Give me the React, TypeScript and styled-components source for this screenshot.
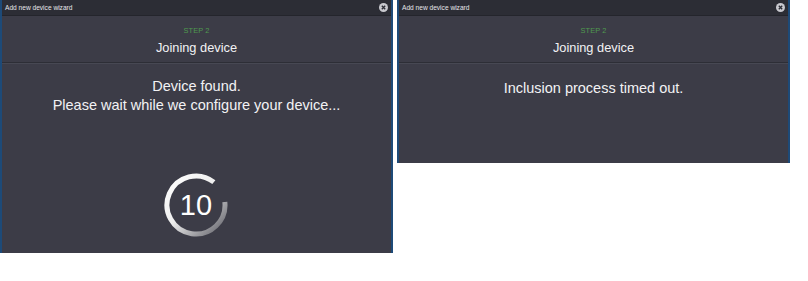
import React from 'react';
import styled, { createGlobalStyle } from 'styled-components';

const colors = {
  panel: '#3c3c47',
  header: '#2c2d35',
  edge: '#1d4a78',
  text: '#f2f2f4',
  step: '#4f9a4f',
};

const GlobalStyle = createGlobalStyle`
  html, body {
    margin: 0;
    padding: 0;
    background: #ffffff;
  }
  body {
    font-family: "Liberation Sans", Arial, sans-serif;
  }
`;

const Page = styled.div`
  display: flex;
  align-items: flex-start;
  gap: 4px;
  width: 808px;
  height: 281px;
`;

const Wizard = styled.div<{ $height: number }>`
  display: flex;
  flex-direction: column;
  box-sizing: border-box;
  width: 393px;
  height: ${(p) => p.$height}px;
  background: ${colors.panel};
  border-left: 2px solid ${colors.edge};
  border-right: 2px solid ${colors.edge};
  color: ${colors.text};
  overflow: hidden;
`;

const TitleBar = styled.div`
  display: flex;
  align-items: center;
  justify-content: space-between;
  height: 15px;
  padding: 0 3px 0 3px;
  background: ${colors.header};
  border-bottom: 1px solid #24252c;
  font-size: 6.6px;
  color: #e6e6ea;
`;

const CloseButton = styled.button`
  display: flex;
  align-items: center;
  justify-content: center;
  width: 10px;
  height: 10px;
  padding: 0;
  border: 0;
  background: none;
  cursor: pointer;
`;

const StepHeader = styled.div`
  display: flex;
  flex-direction: column;
  align-items: center;
  height: 46px;
  border-bottom: 1px solid #2d2e36;
  box-shadow: 0 1px 0 #474853;
`;

const StepLabel = styled.div`
  margin-top: 10px;
  font-size: 7.4px;
  letter-spacing: 0.1px;
  color: ${colors.step};
`;

const StepTitle = styled.div`
  margin-top: 5px;
  font-size: 12.8px;
`;

const Message = styled.div<{ $top: number }>`
  margin-top: ${(p) => p.$top}px;
  text-align: center;
  font-size: 14.5px;
  line-height: 19px;
`;

const Countdown = styled.div`
  position: relative;
  align-self: center;
  width: 66px;
  height: 66px;
  margin-top: 57px;
  margin-right: 1px;
`;

const CountdownValue = styled.span`
  position: absolute;
  inset: 0;
  display: flex;
  align-items: center;
  justify-content: center;
  padding-top: 1px;
  font-size: 29px;
  color: #ffffff;
`;

function CloseIcon(): JSX.Element {
  return (
    <svg width="9" height="9" viewBox="0 0 10 10">
      <circle cx="5" cy="5" r="5" fill="#c9c9cf" />
      <path d="M3.1 3.1L6.9 6.9M6.9 3.1L3.1 6.9" stroke={colors.header} strokeWidth="1.5" />
    </svg>
  );
}

function Ring(): JSX.Element {
  // arc runs from ~1 o'clock counter-clockwise round to ~3 o'clock
  const r = 29;
  const c = 33;
  const start = (-52 * Math.PI) / 180;
  const end = (-6 * Math.PI) / 180;
  const x1 = c + r * Math.cos(start);
  const y1 = c + r * Math.sin(start);
  const x2 = c + r * Math.cos(end);
  const y2 = c + r * Math.sin(end);
  return (
    <svg width="66" height="66" viewBox="0 0 66 66">
      <defs>
        <linearGradient id="ring" x1="0" y1="0" x2="1" y2="1">
          <stop offset="0" stopColor="#ffffff" />
          <stop offset="0.45" stopColor="#eeeeee" />
          <stop offset="1" stopColor="#5e5e66" />
        </linearGradient>
      </defs>
      <path
        d={`M${x1} ${y1} A${r} ${r} 0 1 0 ${x2} ${y2}`}
        fill="none"
        stroke="url(#ring)"
        strokeWidth="5"
      />
    </svg>
  );
}

function Header(): JSX.Element {
  return (
    <>
      <TitleBar>
        <span>Add new device wizard</span>
        <CloseButton aria-label="Close">
          <CloseIcon />
        </CloseButton>
      </TitleBar>
      <StepHeader>
        <StepLabel>STEP 2</StepLabel>
        <StepTitle>Joining device</StepTitle>
      </StepHeader>
    </>
  );
}

export default function App(): JSX.Element {
  return (
    <Page>
      <GlobalStyle />
      <Wizard $height={253}>
        <Header />
        <Message $top={14}>
          Device found.
          <br />
          Please wait while we configure your device...
        </Message>
        <Countdown>
          <Ring />
          <CountdownValue>10</CountdownValue>
        </Countdown>
      </Wizard>
      <Wizard $height={163}>
        <Header />
        <Message $top={16}>Inclusion process timed out.</Message>
      </Wizard>
    </Page>
  );
}
